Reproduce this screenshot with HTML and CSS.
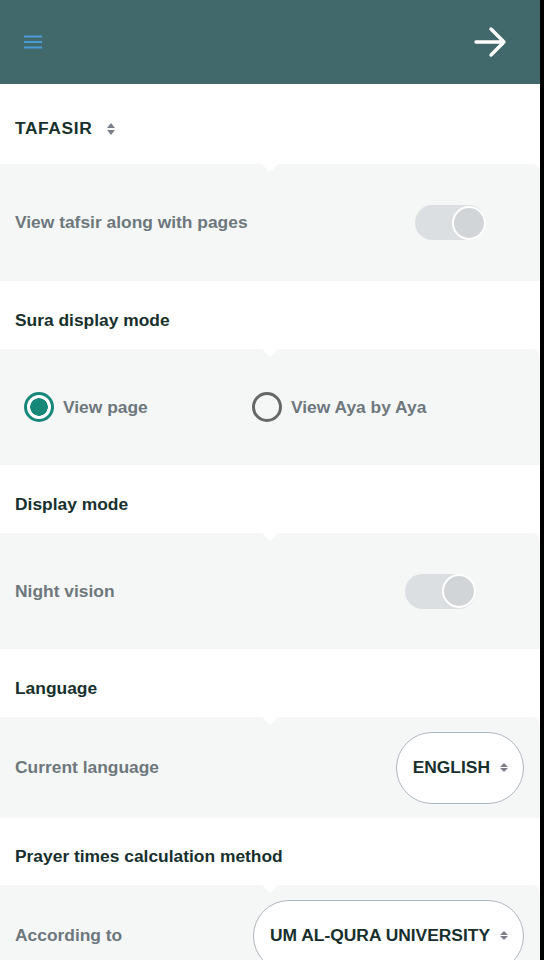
FILE: index.html
```html
<!DOCTYPE html>
<html lang="en">
<head>
  <meta charset="UTF-8" />
  <title>Settings</title>
  <meta name="viewport" content="width=device-width, initial-scale=1.0">
  <link rel="stylesheet" href="styles.css">
</head>
<body>
  <div class="app">
    <header class="topbar">
      <button class="icon-btn menu" aria-label="Menu">
        <svg width="18" height="14" viewBox="0 0 18 14">
          <path d="M0 1.5h18M0 7h18M0 12.5h18" stroke="#4b9ad6" stroke-width="2" fill="none"/>
        </svg>
      </button>
      <button class="icon-btn back" aria-label="Next">
        <svg width="34" height="32" viewBox="0 0 34 32">
          <path d="M2 16h28M17 3l13 13-13 13" stroke="#fff" stroke-width="3.4" fill="none" stroke-linecap="round" stroke-linejoin="round"/>
        </svg>
      </button>
    </header>

    <div class="title-row tafasir">
      <span class="title">TAFASIR</span>
      <span class="sort"></span>
    </div>
    <div class="panel first">
      <span class="label">View tafsir along with pages</span>
      <span class="toggle"><span class="knob"></span></span>
    </div>

    <div class="title-row">
      <span class="title">Sura display mode</span>
    </div>
    <div class="panel radios">
      <label class="radio checked"><span class="dot"></span><span class="label">View page</span></label>
      <label class="radio"><span class="dot"></span><span class="label">View Aya by Aya</span></label>
    </div>

    <div class="title-row">
      <span class="title">Display mode</span>
    </div>
    <div class="panel night">
      <span class="label">Night vision</span>
      <span class="toggle"><span class="knob"></span></span>
    </div>

    <div class="title-row">
      <span class="title">Language</span>
    </div>
    <div class="panel short">
      <span class="label">Current language</span>
      <span class="pill">ENGLISH <span class="sort small"></span></span>
    </div>

    <div class="title-row last">
      <span class="title">Prayer times calculation method</span>
    </div>
    <div class="panel short">
      <span class="label">According to</span>
      <span class="pill">UM AL-QURA UNIVERSITY <span class="sort small"></span></span>
    </div>
  </div>
</body>
</html>
```

FILE: styles.css
```css
body {
  margin: 0;
  background: #000;
  font-family: "Liberation Sans", Arial, sans-serif;
  color: #17302d;
  overflow: hidden;
}

.app {
  width: 540px;
  min-height: 960px;
  background: #fff;
}

.topbar {
  height: 84px;
  background: #41686a;
  display: flex;
  align-items: center;
  justify-content: space-between;
  padding: 0 32px 0 24px;
}

.icon-btn {
  background: none;
  border: 0;
  padding: 0;
  display: flex;
}

.title-row {
  height: 68px;
  box-sizing: border-box;
  display: flex;
  align-items: center;
  padding: 10px 15px 0;
}

.title-row.tafasir {
  height: 80px;
  padding-top: 9px;
}

.title-row.tafasir .title {
  letter-spacing: 0.6px;
}

.title-row.tafasir .sort {
  margin-left: 15px;
}

.title-row.last {
  height: 67px;
}

.title {
  font-size: 17.4px;
  font-weight: bold;
}

.sort {
  display: inline-flex;
  flex-direction: column;
  gap: 2px;
  margin-left: 14px;
}

.sort::before,
.sort::after {
  content: "";
  border-left: 4px solid transparent;
  border-right: 4px solid transparent;
}

.sort::before {
  border-bottom: 5px solid #7b8088;
}

.sort::after {
  border-top: 5px solid #7b8088;
}

.sort.small {
  margin-left: 10px;
  gap: 1.5px;
}

.sort.small::before {
  border-bottom-width: 4px;
}

.sort.small::after {
  border-top-width: 4px;
}

.panel {
  position: relative;
  height: 116px;
  background: #f5f7f7;
  border-top-right-radius: 8px;
  display: flex;
  align-items: center;
  justify-content: space-between;
  padding: 0 54px 0 15px;
}

.panel::before {
  content: "";
  position: absolute;
  top: 0;
  left: 262px;
  border-left: 8px solid transparent;
  border-right: 8px solid transparent;
  border-top: 8px solid #fff;
}

.panel.first {
  height: 117px;
}

.panel.short {
  height: 101px;
  padding-right: 16px;
}

.panel.night {
  padding-right: 64px;
}

.label {
  font-size: 17.4px;
  font-weight: bold;
  color: #6d777c;
}

.toggle {
  width: 71px;
  height: 35px;
  border-radius: 18px;
  background: #dcdfe1;
  display: flex;
  justify-content: flex-end;
  align-items: center;
}

.knob {
  width: 30px;
  height: 30px;
  border-radius: 50%;
  background: #d2d5d8;
  border: 2px solid #fff;
}

.radios {
  justify-content: flex-start;
  padding-left: 24px;
}

.radio {
  display: flex;
  align-items: center;
  gap: 9px;
  width: 228px;
}

.radio .dot {
  width: 24px;
  height: 24px;
  border-radius: 50%;
  border: 3px solid #676767;
}

.radio.checked .dot {
  border-color: #16887a;
  background: radial-gradient(circle, #16887a 0 8.5px, #fff 9px);
}

.pill {
  display: flex;
  align-items: center;
  padding: 0 15px 0 16px;
  height: 70px;
  border: 1.5px solid #aeb6bd;
  border-radius: 36px;
  background: #fff;
  font-size: 17.4px;
  font-weight: bold;
  color: #17302d;
}
```
